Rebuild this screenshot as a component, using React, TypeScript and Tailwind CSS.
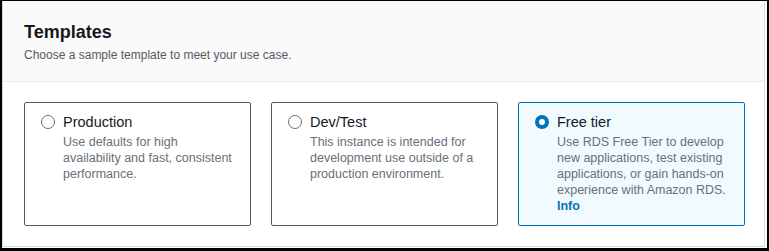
const templates = [
  {
    id: "production",
    title: "Production",
    description: "Use defaults for high availability and fast, consistent performance.",
  },
  {
    id: "devtest",
    title: "Dev/Test",
    description: "This instance is intended for development use outside of a production environment.",
  },
  {
    id: "free",
    title: "Free tier",
    description:
      "Use RDS Free Tier to develop new applications, test existing applications, or gain hands-on experience with Amazon RDS.",
    info: true,
  },
];

export default function App() {
  const selected = "free";

  return (
    <div
      className="w-[769px] h-[251px] border-t border-l-2 border-r-2 border-b-[3px] border-black bg-white pr-[2px] pb-[1px]"
      style={{ fontFamily: '"Liberation Sans", Arial, sans-serif' }}
    >
      <div className="h-full flex flex-col border-l border-r border-b border-[#d5dbdb]">
        <div className="h-[81px] shrink-0 bg-[#fafafa] border-b border-[#eaeded] pl-[21px] pt-[19px]">
          <h2 className="text-[18px] leading-6 font-bold text-[#16191f]">Templates</h2>
          <p className="text-[12px] leading-4 mt-[3px] text-[#545b64]">
            Choose a sample template to meet your use case.
          </p>
        </div>
        <div className="pl-[21px] pr-[19px] pt-[20px] grid grid-cols-3 gap-[20px]">
          {templates.map((t) => {
            const active = t.id === selected;
            return (
              <label
                key={t.id}
                className={
                  active
                    ? "h-[124px] flex gap-2 border border-[#0073bb] bg-[#f1faff] rounded-[2px] pl-4 pr-3 pt-[9px]"
                    : "h-[124px] flex gap-2 border border-[#545b64] bg-white rounded-[2px] pl-4 pr-3 pt-[9px]"
                }
              >
                <span className="shrink-0 h-5 flex items-center">
                  {active ? (
                    <span className="w-[14px] h-[14px] rounded-full border-[4px] border-[#0073bb] bg-white" />
                  ) : (
                    <span className="w-[14px] h-[14px] rounded-full border-[1.5px] border-[#687078] bg-white" />
                  )}
                </span>
                <span className="flex flex-col">
                  <span className="text-[14.5px] leading-5 text-[#16191f]">{t.title}</span>
                  <span className="text-[12.5px] leading-4 text-[#687078] mt-[2px]">
                    {t.description}
                  </span>
                  {t.info && (
                    <span className="text-[12.5px] leading-4 font-bold text-[#0073bb]">Info</span>
                  )}
                </span>
              </label>
            );
          })}
        </div>
      </div>
    </div>
  );
}
